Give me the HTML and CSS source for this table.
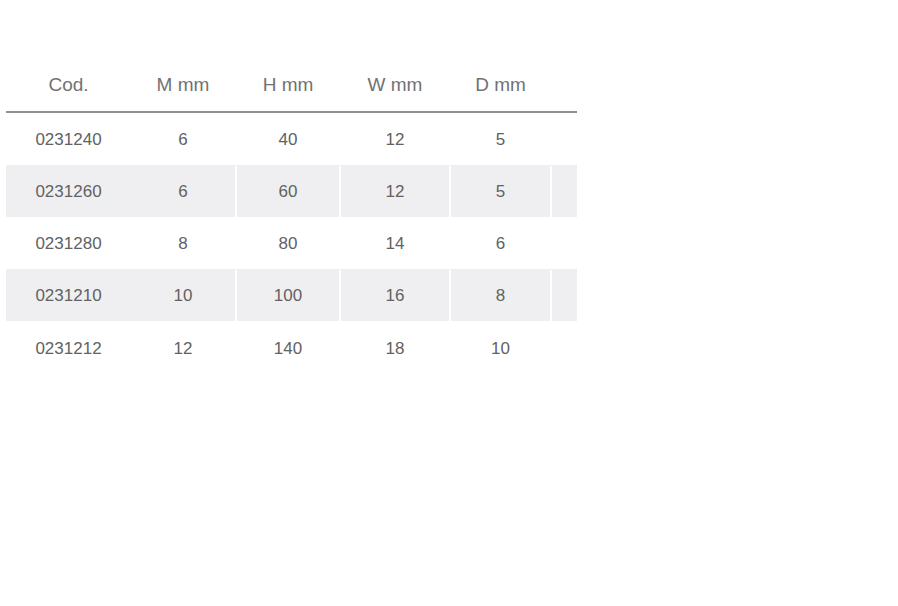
FILE: index.html
```html
<!DOCTYPE html>
<html>
<head>
<meta charset="utf-8">
<link rel="stylesheet" href="styles.css">
</head>
<body>
<div class="table">
  <div class="row head">
    <div class="cell">Cod.</div><div class="cell">M mm</div><div class="cell">H mm</div><div class="cell">W mm</div><div class="cell">D mm</div><div class="cell"></div>
  </div>
  <div class="row">
    <div class="cell">0231240</div><div class="cell">6</div><div class="cell">40</div><div class="cell">12</div><div class="cell">5</div><div class="cell"></div>
  </div>
  <div class="row alt">
    <div class="cell">0231260</div><div class="cell">6</div><div class="cell">60</div><div class="cell">12</div><div class="cell">5</div><div class="cell"></div>
  </div>
  <div class="row">
    <div class="cell">0231280</div><div class="cell">8</div><div class="cell">80</div><div class="cell">14</div><div class="cell">6</div><div class="cell"></div>
  </div>
  <div class="row alt">
    <div class="cell">0231210</div><div class="cell">10</div><div class="cell">100</div><div class="cell">16</div><div class="cell">8</div><div class="cell"></div>
  </div>
  <div class="row last">
    <div class="cell">0231212</div><div class="cell">12</div><div class="cell">140</div><div class="cell">18</div><div class="cell">10</div><div class="cell"></div>
  </div>
</div>
</body>
</html>
```
FILE: styles.css
```css
html, body {
  margin: 0;
  padding: 0;
  background: #ffffff;
}
body {
  font-family: "Liberation Sans", Arial, sans-serif;
  color: #626262;
}
.table {
  width: 571px;
  margin: 59px 0 0 6px;
}
.row {
  display: grid;
  grid-template-columns: 125px 104px 104px 110px 101px 27px;
  height: 52px;
  font-size: 17px;
  padding-top: 1px;
  box-sizing: border-box;
}
.row.head {
  height: 54px;
  padding-top: 0;
  border-bottom: 2px solid #909090;
  font-size: 19px;
  color: #727272;
}
.row.last {
  padding-top: 4px;
}
.cell {
  display: flex;
  align-items: center;
  justify-content: center;
}
.row .cell:nth-child(n+3) {
  border-left: 2px solid #ffffff;
}
.row.head .cell:nth-child(n+3) {
  border-left: 2px solid transparent;
}
.row.alt {
  background: #efeff1;
}
```
